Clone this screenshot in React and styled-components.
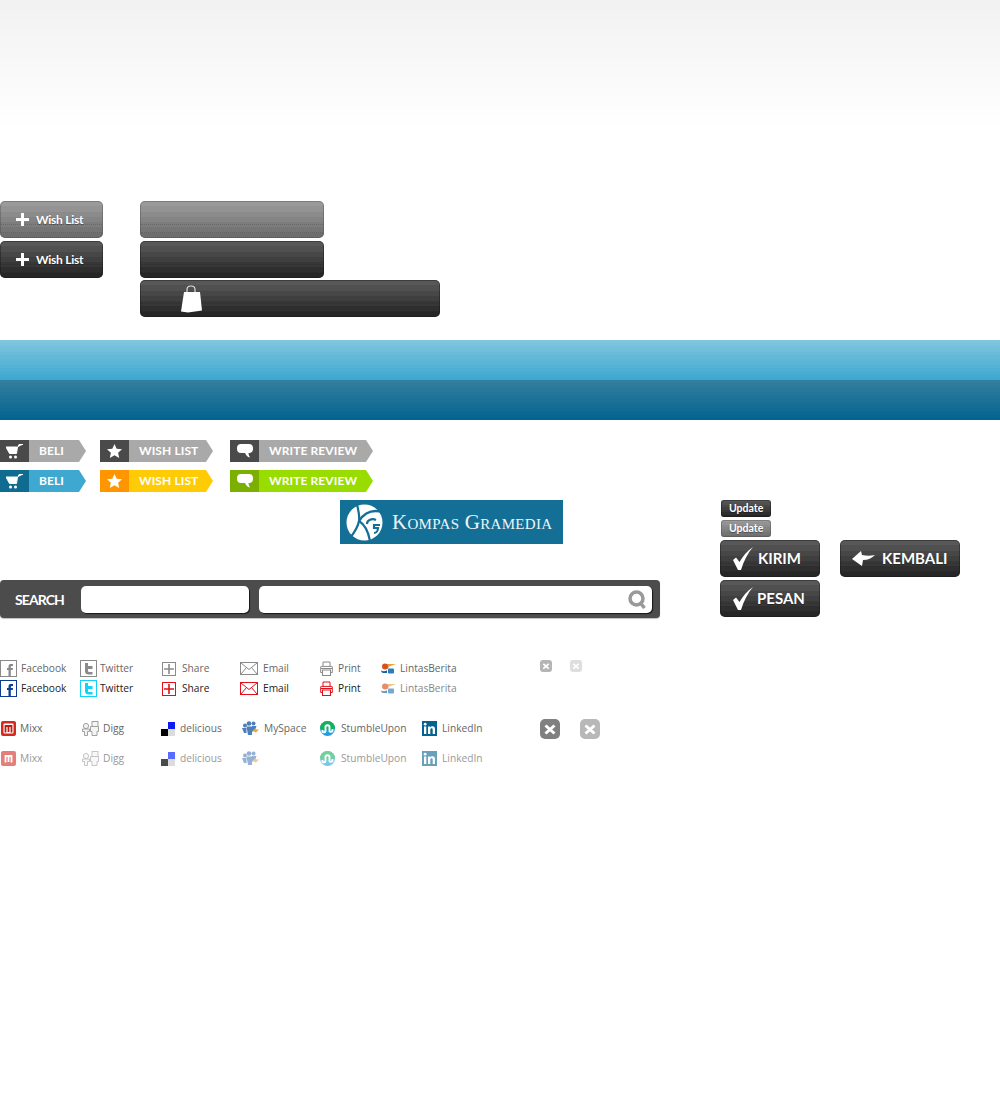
import React from 'react';
import styled, { createGlobalStyle } from 'styled-components';

const GlobalStyle = createGlobalStyle`
  html, body { margin: 0; background: #fff; }
  body { font-family: "Open Sans", "Liberation Sans", sans-serif; }
`;

// the sprite's buttons are drawn in flat bands, so build the gradient from hard stops
const hex = (c) => [1, 3, 5].map((i) => parseInt(c.slice(i, i + 2), 16));
const bands = (from, to, count, start = 0, end = 100) => {
  const a = hex(from);
  const b = hex(to);
  const stops = [];
  for (let i = 0; i < count; i++) {
    const t = count === 1 ? 0 : i / (count - 1);
    const col = a.map((v, k) => Math.round(v + (b[k] - v) * t));
    const p0 = start + ((end - start) * i) / count;
    const p1 = start + ((end - start) * (i + 1)) / count;
    stops.push(`rgb(${col.join(',')}) ${p0}% ${p1}%`);
  }
  return stops.join(', ');
};

const TopFade = styled.div`
  height: 201px;
  background: linear-gradient(180deg, ${bands('#f2f2f2', '#ffffff', 14, 0, 67)}, #fff 67%);
`;

const ButtonBlock = styled.section`
  display: grid;
  grid-template-columns: 140px 1fr;
  grid-template-rows: 40px 39px 37px;
`;

const Bar = styled.div`
  position: relative;
  box-sizing: border-box;
  grid-column: ${({ $col }) => $col};
  grid-row: ${({ $row }) => $row};
  width: ${({ $w }) => $w}px;
  height: ${({ $h = 37 }) => $h}px;
  margin-left: ${({ $left = 0 }) => $left}px;
  display: flex;
  align-items: center;
  gap: ${({ $gap = 7 }) => $gap}px;
  padding-left: ${({ $pad = 0 }) => $pad}px;
  border-radius: ${({ $h = 37 }) => ($h < 37 ? 3 : 5)}px;
  color: #fff;
  font-family: Lato, "Open Sans", sans-serif;
  font-weight: 700;
  background: linear-gradient(
    180deg,
    ${({ $light }) => ($light ? bands('#9a9a9a', '#6e6e6e', 7) : bands('#585858', '#262626', 7))}
  );
  box-shadow: inset 0 0 0 1px ${({ $light }) => ($light ? 'rgba(70,70,70,.35)' : 'rgba(20,20,20,.4)')};

  &::after {
    content: '';
    display: ${({ $h = 37 }) => ($h < 37 ? 'none' : 'block')};
    position: absolute;
    left: 1px;
    right: 1px;
    top: 23px;
    height: 7px;
    border-top: 1px dotted rgba(0, 0, 0, 0.16);
    border-bottom: 1px dotted rgba(0, 0, 0, 0.16);
  }
`;

const BarLabel = styled.span`
  position: relative;
  z-index: 1;
  font-size: ${({ $size = 12 }) => $size}px;
  letter-spacing: ${({ $track = 0 }) => $track}px;
  line-height: 1;
  text-shadow: 0 1px 1px rgba(0, 0, 0, 0.35);
`;

const BarIcon = styled.svg`
  position: relative;
  z-index: 1;
  flex: none;
`;

const BlueBand = styled.div`
  height: 80px;
  margin-top: 23px;
  background: linear-gradient(
    180deg,
    ${bands('#7fc5de', '#3fa8d1', 13, 0, 50)},
    ${bands('#337e9f', '#04648f', 13, 50, 100)}
  );
`;

const TagBlock = styled.section`
  display: grid;
  grid-template-columns: 100px 130px 1fr;
  row-gap: 8px;
  margin-top: 20px;
`;

const Tag = styled.div`
  width: ${({ $w }) => $w}px;
  height: 22px;
  display: flex;
  background: ${({ $bg }) => $bg};
  clip-path: polygon(0 0, calc(100% - 7px) 0, 100% 50%, calc(100% - 7px) 100%, 0 100%);
  border-radius: 2px;
`;

const TagIcon = styled.div`
  width: 29px;
  flex: none;
  display: flex;
  align-items: center;
  justify-content: center;
  background: ${({ $bg }) => $bg};
`;

const TagText = styled.span`
  padding-left: 10px;
  color: #fff;
  font-family: Lato, "Open Sans", sans-serif;
  font-size: 12px;
  font-weight: 700;
  line-height: 22px;
  letter-spacing: 0.1px;
  white-space: nowrap;
`;

const MiddleBlock = styled.section`
  display: grid;
  grid-template-columns: 720px 1fr;
  margin-top: 8px;
`;

const Logo = styled.div`
  width: 223px;
  height: 44px;
  margin-left: 340px;
  display: flex;
  align-items: center;
  gap: 9px;
  box-sizing: border-box;
  padding-left: 6px;
  background: #136f95;
`;

const LogoText = styled.span`
  color: #eef5f8;
  font-family: "Liberation Serif", serif;
  font-size: 21px;
  font-variant: small-caps;
  letter-spacing: 0.3px;
  white-space: nowrap;
`;

const SearchBar = styled.form`
  width: 660px;
  height: 38px;
  margin: 36px 0 0;
  box-sizing: border-box;
  display: flex;
  align-items: center;
  padding: 0 8px 0 15px;
  border-radius: 4px;
  background: #4c4c4c;
  box-shadow: 0 1px 1px rgba(0, 0, 0, 0.25);
`;

const SearchLabel = styled.span`
  width: 66px;
  color: #fff;
  font-family: Lato, "Open Sans", sans-serif;
  font-size: 14px;
  font-weight: 700;
  letter-spacing: -0.9px;
`;

const SearchField = styled.div`
  position: relative;
  height: 27px;
  flex: ${({ $grow }) => ($grow ? 1 : 'none')};
  width: ${({ $grow }) => ($grow ? 'auto' : '168px')};
  margin-right: ${({ $grow }) => ($grow ? 0 : '10px')};
  border-radius: 5px;
  background: #fff;
  box-shadow: 1px 1px 1px rgba(0, 0, 0, 0.7);
`;

const SearchGlass = styled.svg`
  position: absolute;
  right: 5px;
  top: 4px;
`;

const RightCol = styled.div`
  display: grid;
  grid-template-columns: 120px 1fr;
  grid-template-rows: 20px 20px 40px 37px;
`;

const Social = styled.section`
  margin-top: 42px;
`;

const SocialRow = styled.div`
  display: flex;
  align-items: center;
  height: 17px;
  margin-top: ${({ $top = 0 }) => $top}px;
`;

const SocialItem = styled.a`
  flex: none;
  box-sizing: border-box;
  width: ${({ $w }) => $w}px;
  padding-left: ${({ $inset = 0 }) => $inset}px;
  display: flex;
  align-items: center;
  gap: ${({ $gap = 4 }) => $gap}px;
  font-size: 10.2px;
  color: ${({ $color }) => $color};
  white-space: nowrap;
`;

const SocialLabel = styled.span`
  padding-bottom: 2px;
`;

const CloseCell = styled.span`
  flex: none;
  width: ${({ $w }) => $w}px;
  align-self: flex-start;
  margin-top: ${({ $lift = 0 }) => -$lift}px;
  display: flex;
`;

const IconBox = styled.svg`
  flex: none;
  opacity: ${({ $fade = 1 }) => $fade};
`;

const FbIcon = ({ c, f = c }) => (
  <IconBox width="17" height="17" viewBox="0 0 17 17">
    <rect x="0.5" y="0.5" width="16" height="16" fill="#fff" stroke={c} />
    <path d="M8.5 16V10H7V8h1.5V6.5C8.5 4.6 9.6 4 11 4h2v2h-1.2c-.7 0-1 .3-1 .9V8H13l-.3 2h-1.9v6z" fill={f} />
  </IconBox>
);

const TwIcon = ({ c, f = c }) => (
  <IconBox width="17" height="17" viewBox="0 0 17 17">
    <rect x="0.5" y="0.5" width="16" height="16" fill="#fff" stroke={c} />
    <path d="M5 3h3v3h4.500v3H8v1.500c0 1 .5 1.500 1.500 1.500h3v2.500H9c-2.600 0-4-1.400-4-3.600z" fill={f} />
  </IconBox>
);

const PlusIcon = ({ c }) => (
  <IconBox width="14" height="14" viewBox="0 0 14 14">
    <rect x="0.5" y="0.5" width="13" height="13" fill="#fff" stroke={c} />
    <path d="M7 2v10M2 7h10" stroke={c} strokeWidth="1.600" />
  </IconBox>
);

const MailIcon = ({ c }) => (
  <IconBox width="18" height="13" viewBox="0 0 18 13">
    <rect x="0.5" y="0.5" width="17" height="12" fill="#fff" stroke={c} />
    <path d="M1 1l8 6.500L17 1M1 12l5.500-6.500M17 12l-5.500-6.500" fill="none" stroke={c} />
  </IconBox>
);

const PrintIcon = ({ c }) => (
  <IconBox width="13" height="15" viewBox="0 0 13 15">
    <path d="M3 5.500V1h7v4.500M2.500 11.500H.7V6c0-.4.2-.6.6-.6h10.400c.4 0 .6.2.6.6v5.500h-1.800" fill="none" stroke={c} />
    <rect x="2.500" y="9" width="8" height="5.500" fill="none" stroke={c} />
    <path d="M1 7.500h11" stroke={c} />
  </IconBox>
);

const LintasIcon = ({ fade }) => (
  <IconBox width="15" height="11" viewBox="0 0 15 11" $fade={fade}>
    <path d="M3 1h12L8 3.500 7 6H3z" fill="#e9a23b" />
    <circle cx="4" cy="3.500" r="3" fill="#d9501f" />
    <path d="M0 7.500c2 1 4 .8 6-.2V10H2C1 10 .3 9 0 7.500z" fill="#1f5f9e" />
    <rect x="7" y="5.500" width="6" height="5" rx="1" fill="#2a7db8" />
  </IconBox>
);

const MixxIcon = ({ fade }) => (
  <IconBox width="15" height="15" viewBox="0 0 15 15" $fade={fade}>
    <rect width="15" height="15" rx="2" fill="#d6281f" />
    {!fade && <rect x="2.500" y="2.500" width="10" height="10" rx="1" fill="#fff" />}
    <path d="M4.500 11.500V5h6v6.500M7.500 5v6" fill="none" stroke={fade ? '#fff' : '#c01a12'} strokeWidth="1.800" />
  </IconBox>
);

const DiggIcon = ({ fade }) => (
  <IconBox width="17" height="15" viewBox="0 0 17 15" $fade={fade}>
    <g fill="#f4f4f4" stroke="#a0a0a0">
      <rect x="10" y="0.500" width="6" height="5" />
      <path d="M8.500 5.500h8v5h-1.500v4h-5v-4H8.500z" />
      <circle cx="4" cy="5" r="2.600" />
      <path d="M.5 8h7v2.500h-2v4h-3v-4h-2z" />
    </g>
  </IconBox>
);

const DeliciousIcon = ({ fade }) => (
  <IconBox width="14" height="14" viewBox="0 0 14 14">
    <rect x="7" y="0" width="7" height="7" fill={fade ? '#5a6cff' : '#0a1ef0'} />
    <rect x="0" y="7" width="7" height="7" fill={fade ? '#4a4a4a' : '#000'} />
    <rect x="7" y="7" width="7" height="7" fill="#dcdcdc" />
  </IconBox>
);

const MySpaceIcon = ({ fade }) => (
  <IconBox width="17" height="15" viewBox="0 0 17 15" $fade={fade}>
    <g fill="#4f7fb8">
      <circle cx="3" cy="4.500" r="2" />
      <circle cx="7" cy="2.500" r="2.300" />
      <circle cx="11.500" cy="2.500" r="2" />
      <path d="M0 7h4.500v5H2zM4.500 5.500h5.500V14H6z" />
      <path d="M10 5h4.500l-1 3-3.500 3z" />
    </g>
    <path d="M10.500 10l3-3 1 1.500h2.500l-3 3z" fill="#f2a33a" />
  </IconBox>
);

const StumbleIcon = ({ fade }) => (
  <IconBox width="15" height="15" viewBox="0 0 15 15" $fade={fade}>
    <circle cx="7.500" cy="7.500" r="7.500" fill="#1f9fdf" />
    <path d="M0 7.500a7.500 7.500 0 0 1 15 0l-2 1H2z" fill="#16b060" />
    <path d="M2.500 9v1.500c0 1.300 3 1.300 3-.5V6c0-2.300 4-2.300 4 0v4c0 1.300 3 1.300 3-.5V8" fill="none" stroke="#fff" strokeWidth="1.900" />
  </IconBox>
);

const LinkedInIcon = ({ fade }) => (
  <IconBox width="15" height="15" viewBox="0 0 15 15" $fade={fade}>
    <rect width="15" height="15" fill="#04648f" />
    <rect x="2" y="5.500" width="2.300" height="7.500" fill="#fff" />
    <circle cx="3.150" cy="3.200" r="1.400" fill="#fff" />
    <path d="M6 5.500h2.200v1.100c.5-.8 1.300-1.300 2.300-1.300 1.800 0 2.500 1.100 2.500 3V13h-2.300V8.800c0-.9-.3-1.500-1.100-1.500s-1.300.6-1.300 1.500V13H6z" fill="#fff" />
  </IconBox>
);

const CloseIcon = ({ size, bg }) => (
  <IconBox width={size} height={size} viewBox="0 0 20 20">
    <rect width="20" height="20" rx="5" fill={bg} />
    <path d="M5.500 6.500l9 8M14.500 6.500l-9 8" stroke="#fff" strokeWidth="3" />
  </IconBox>
);

const rowA = [
  { label: 'Facebook', w: 80, icon: <FbIcon c="#8a8a8a" /> },
  { label: 'Twitter', w: 80, gap: 3, icon: <TwIcon c="#8a8a8a" /> },
  { label: 'Share', w: 80, inset: 2, gap: 6, icon: <PlusIcon c="#8a8a8a" /> },
  { label: 'Email', w: 80, gap: 5, icon: <MailIcon c="#8a8a8a" /> },
  { label: 'Print', w: 60, gap: 5, icon: <PrintIcon c="#8a8a8a" /> },
  { label: 'LintasBerita', w: 160, inset: 1, gap: 4, icon: <LintasIcon /> },
];

const rowB = [
  { label: 'Facebook', w: 80, icon: <FbIcon c="#0a3d8f" f="#0a3d8f" /> },
  { label: 'Twitter', w: 80, gap: 3, icon: <TwIcon c="#12d2f5" f="#12d2f5" /> },
  { label: 'Share', w: 80, inset: 2, gap: 6, icon: <PlusIcon c="#e0101a" /> },
  { label: 'Email', w: 80, gap: 5, icon: <MailIcon c="#e0101a" /> },
  { label: 'Print', w: 60, gap: 5, icon: <PrintIcon c="#e0101a" /> },
  { label: 'LintasBerita', w: 160, inset: 1, gap: 4, color: '#888', icon: <LintasIcon fade={0.65} /> },
];

const rowC = (fade) => [
  { label: 'Mixx', w: 80, inset: 1, icon: <MixxIcon fade={fade} /> },
  { label: 'Digg', w: 80, inset: 2, gap: 4, icon: <DiggIcon fade={fade} /> },
  { label: 'delicious', w: 80, inset: 1, gap: 5, icon: <DeliciousIcon fade={fade} /> },
  { label: fade ? '' : 'MySpace', w: 80, inset: 2, gap: 5, icon: <MySpaceIcon fade={fade} /> },
  { label: 'StumbleUpon', w: 100, gap: 6, icon: <StumbleIcon fade={fade} /> },
  { label: 'LinkedIn', w: 120, inset: 2, gap: 5, icon: <LinkedInIcon fade={fade} /> },
];

const Row = ({ items, color, top, children }) => (
  <SocialRow $top={top}>
    {items.map((it) => (
      <SocialItem key={it.label + it.w} $w={it.w} $inset={it.inset} $gap={it.gap} $color={it.color || color}>
        {it.icon}
        <SocialLabel>{it.label}</SocialLabel>
      </SocialItem>
    ))}
    {children}
  </SocialRow>
);

const Plus = () => (
  <BarIcon width="13" height="13" viewBox="0 0 13 13">
    <path d="M6.500 0v13M0 6.500h13" stroke="#fff" strokeWidth="3" />
  </BarIcon>
);

const Check = () => (
  <BarIcon width="20" height="23" viewBox="0 0 20 23">
    <path d="M0 13l3-2.500 3.500 4.500C10 9 14 4 20 0c-5 6-9.500 14-12 23h-3z" fill="#fff" />
  </BarIcon>
);

const Cart = () => (
  <svg width="18" height="15" viewBox="0 0 18 15">
    <path d="M0 3h11.500L10.500 9.500H3.500zM12 3l1-2.500h4" fill="#fff" stroke="#fff" strokeWidth="1" />
    <circle cx="4.500" cy="13" r="1.500" fill="#fff" />
    <circle cx="9.500" cy="13" r="1.500" fill="#fff" />
  </svg>
);

const Star = () => (
  <svg width="15" height="14" viewBox="0 0 15 14">
    <path d="M7.500 0l2.200 4.700 5.300.6-3.900 3.500 1.100 5.200-4.700-2.700L2.800 14l1.100-5.200L0 5.300l5.300-.6z" fill="#fff" />
  </svg>
);

const Bubble = () => (
  <svg width="16" height="14" viewBox="0 0 16 14">
    <path d="M4 0h8c2.500 0 4 1.500 4 4v1c0 2.500-1.500 4-4 4h-.5c0 1.500.5 3 1.500 4.500-2.500-.5-4-2.200-5-4.500H4C1.500 9 0 7.500 0 5V4c0-2.500 1.500-4 4-4z" fill="#fff" />
  </svg>
);

const tagCols = [
  { text: 'BELI', w: 86, Icon: Cart },
  { text: 'WISH LIST', w: 113, Icon: Star },
  { text: 'WRITE REVIEW', w: 143, Icon: Bubble },
];

const tagColours = [
  { main: '#a9a9a9', side: '#4a4a4a' },
  { main: '#3fa8d1', side: '#0f6b90' },
  { main: '#ffcb05', side: '#ff9600' },
  { main: '#99dd00', side: '#7cb000' },
];

const tagRows = [
  [tagColours[0], tagColours[0], tagColours[0]],
  [tagColours[1], tagColours[2], tagColours[3]],
];

const App = () => (
  <>
    <GlobalStyle />
    <TopFade />

    <ButtonBlock>
      <Bar $col={1} $row={1} $w={103} $pad={16} $light>
        <Plus />
        <BarLabel $track={-0.25}>Wish List</BarLabel>
      </Bar>
      <Bar $col={2} $row={1} $w={184} $light />
      <Bar $col={1} $row={2} $w={103} $pad={16}>
        <Plus />
        <BarLabel $track={-0.25}>Wish List</BarLabel>
      </Bar>
      <Bar $col={2} $row={2} $w={184} />
      <Bar $col={2} $row={3} $w={300} $pad={41}>
        <BarIcon width="21" height="28" viewBox="0 0 21 28">
          <path d="M6 8V4.500C6 2 7.500 1 10 1s4 1 4 3.500V8" fill="none" stroke="#ddd" strokeWidth="1.200" />
          <path d="M3 7h16l2 18.500L7 27.500l-7-1z" fill="#fff" />
        </BarIcon>
      </Bar>
    </ButtonBlock>

    <BlueBand />

    <TagBlock>
      {tagRows.flatMap((row, r) =>
        row.map((c, i) => {
          const { text, w, Icon } = tagCols[i];
          return (
            <Tag key={`${r}-${i}`} $w={w} $bg={c.main}>
              <TagIcon $bg={c.side}>
                <Icon />
              </TagIcon>
              <TagText>{text}</TagText>
            </Tag>
          );
        })
      )}
    </TagBlock>

    <MiddleBlock>
      <div>
        <Logo>
          <svg width="37" height="37" viewBox="0 0 37 37">
            <circle cx="18.500" cy="18.500" r="18" fill="#fff" />
            <path d="M11 0c1 6 3 11 2 17-1 6-5 12-9 17" fill="none" stroke="#136f95" strokeWidth="2.200" />
            <path d="M13 17C18 9 26 5 37 8" fill="none" stroke="#136f95" strokeWidth="2.400" />
            <path d="M13 17c5 3 9 9 11 20" fill="none" stroke="#136f95" strokeWidth="2.200" />
            <path d="M34 21h-6v3h4c0 3-2 5-4 5" fill="none" stroke="#136f95" strokeWidth="2.200" />
            <path d="M30 16c-4-2-9 0-9 4" fill="none" stroke="#136f95" strokeWidth="2.200" />
          </svg>
          <LogoText>Kompas Gramedia</LogoText>
        </Logo>
        <SearchBar>
          <SearchLabel>SEARCH</SearchLabel>
          <SearchField />
          <SearchField $grow>
            <SearchGlass width="19" height="19" viewBox="0 0 19 19">
              <circle cx="8.500" cy="8.500" r="6.500" fill="none" stroke="#999" strokeWidth="3.500" />
              <path d="M12.500 13l4 5" stroke="#999" strokeWidth="3.500" />
            </SearchGlass>
          </SearchField>
        </SearchBar>
      </div>

      <RightCol>
        <Bar $col={1} $row={1} $w={50} $h={17} $pad={8} $left={1}>
          <BarLabel $size={10.5}>Update</BarLabel>
        </Bar>
        <Bar $col={1} $row={2} $w={50} $h={17} $pad={8} $left={1} $light>
          <BarLabel $size={10.5}>Update</BarLabel>
        </Bar>
        <Bar $col={1} $row={3} $w={100} $pad={13} $gap={5}>
          <Check />
          <BarLabel $size={15}>KIRIM</BarLabel>
        </Bar>
        <Bar $col={2} $row={3} $w={120} $pad={12} $gap={7}>
          <BarIcon width="23" height="15" viewBox="0 0 23 15">
            <path d="M0 8l9-8 1 4c4 1 9 1 13 0-3 3-7 5-12 5l-1 6z" fill="#fff" />
          </BarIcon>
          <BarLabel $size={15}>KEMBALI</BarLabel>
        </Bar>
        <Bar $col={1} $row={4} $w={100} $pad={13} $gap={4}>
          <Check />
          <BarLabel $size={15}>PESAN</BarLabel>
        </Bar>
      </RightCol>
    </MiddleBlock>

    <Social>
      <Row items={rowA} color="#666">
        <CloseCell $w={30}><CloseIcon size={12} bg="#b5b5b5" /></CloseCell>
        <CloseCell $w={30}><CloseIcon size={12} bg="#dedede" /></CloseCell>
      </Row>
      <Row items={rowB} color="#222" top={3} />
      <Row items={rowC()} color="#666" top={23}>
        <CloseCell $w={40} $lift={1}><CloseIcon size={20} bg="#808080" /></CloseCell>
        <CloseCell $w={40} $lift={1}><CloseIcon size={20} bg="#b8b8b8" /></CloseCell>
      </Row>
      <Row items={rowC(0.6)} color="#999" top={13} />
    </Social>
  </>
);

export default App;
